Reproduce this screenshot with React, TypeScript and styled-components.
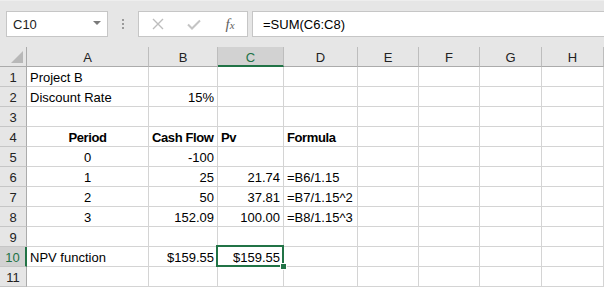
import styled, { createGlobalStyle } from "styled-components";

const GREEN = "#217346";
const GRID = "#d4d4d4";

const GlobalStyle = createGlobalStyle`
  html, body {
    margin: 0;
    padding: 0;
    background: #ffffff;
  }
  body {
    font-family: "Liberation Sans", Arial, sans-serif;
    font-size: 13px;
    color: #000;
    overflow: hidden;
  }
`;

type Align = "left" | "center" | "right";

const columns = ["A", "B", "C", "D", "E", "F", "G", "H"];

// one row = the 8 columns, values only
const rows: { text: string; align?: Align; bold?: boolean }[][] = [
  [{ text: "Project B" }],
  [{ text: "Discount Rate" }, { text: "15%", align: "right" }],
  [],
  [
    { text: "Period", align: "center", bold: true },
    { text: "Cash Flow", bold: true },
    { text: "Pv", bold: true },
    { text: "Formula", bold: true },
  ],
  [{ text: "0", align: "center" }, { text: "-100", align: "right" }],
  [
    { text: "1", align: "center" },
    { text: "25", align: "right" },
    { text: "21.74", align: "right" },
    { text: "=B6/1.15" },
  ],
  [
    { text: "2", align: "center" },
    { text: "50", align: "right" },
    { text: "37.81", align: "right" },
    { text: "=B7/1.15^2" },
  ],
  [
    { text: "3", align: "center" },
    { text: "152.09", align: "right" },
    { text: "100.00", align: "right" },
    { text: "=B8/1.15^3" },
  ],
  [],
  [
    { text: "NPV function" },
    { text: "$159.55", align: "right" },
    { text: "$159.55", align: "right" },
  ],
  [],
];

const activeRow = 10;
const activeCol = "C";

export default function App() {
  return (
    <Window>
      <GlobalStyle />
      <Toolbar>
        <NameBox>
          <span>C10</span>
          <DropArrow />
        </NameBox>
        <Grip>
          <i />
          <i />
          <i />
        </Grip>
        <FxButtons>
          <svg width="12" height="12" viewBox="0 0 12 12">
            <path d="M1 1 L11 11 M11 1 L1 11" stroke="#bdbdbd" strokeWidth="1.4" fill="none" />
          </svg>
          <svg width="14" height="11" viewBox="0 0 14 11">
            <path d="M1 5.5 L5 9.5 L13 1.5" stroke="#c4c4c4" strokeWidth="2" fill="none" />
          </svg>
          <FxLabel>
            f<sub>x</sub>
          </FxLabel>
        </FxButtons>
        <FormulaInput>=SUM(C6:C8)</FormulaInput>
      </Toolbar>

      <Sheet>
        <Corner />
        {columns.map((c) => (
          <ColHeader key={c} $active={c === activeCol}>
            {c}
          </ColHeader>
        ))}
        {rows.map((r, i) => {
          const n = i + 1;
          return [
            <RowHeader key={"h" + n} $active={n === activeRow}>
              {n}
            </RowHeader>,
            ...columns.map((c, j) => {
              const v = r[j];
              const selected = n === activeRow && c === activeCol;
              return (
                <Cell key={c + n} $align={v?.align ?? "left"} $bold={v?.bold}>
                  {v?.text}
                  {selected && (
                    <Selection>
                      <Handle />
                    </Selection>
                  )}
                </Cell>
              );
            }),
          ];
        })}
      </Sheet>
    </Window>
  );
}

const Window = styled.div`
  width: 604px;
  height: 287px;
  overflow: hidden;
  background: #fff;
`;

const Toolbar = styled.div`
  height: 47px;
  box-sizing: border-box;
  background: #e6e6e6;
  border-top: 1px solid #eeeeee;
  display: flex;
  align-items: flex-start;
  padding: 10px 0 0 6px;
`;

const NameBox = styled.div`
  width: 102px;
  height: 26px;
  box-sizing: border-box;
  background: #fff;
  border: 1px solid #c6c6c6;
  display: flex;
  align-items: center;
  justify-content: space-between;
  padding: 0 6px 0 6px;
  color: #222;
  font-size: 13px;
`;

const DropArrow = styled.span`
  width: 0;
  height: 0;
  border-left: 4px solid transparent;
  border-right: 4px solid transparent;
  border-top: 4px solid #7a7a7a;
  margin-top: -2px;
`;

const Grip = styled.div`
  width: 30px;
  height: 26px;
  display: flex;
  flex-direction: column;
  align-items: center;
  justify-content: center;
  gap: 2px;

  i {
    display: block;
    width: 2px;
    height: 2px;
    background: #9a9a9a;
  }
`;

const FxButtons = styled.div`
  width: 110px;
  height: 26px;
  box-sizing: border-box;
  background: #fff;
  border: 1px solid #c6c6c6;
  display: grid;
  grid-template-columns: 36px 36px 36px;
  align-items: center;
  justify-items: center;
  padding-left: 1px;
`;

const FxLabel = styled.span`
  font-family: "Liberation Serif", "Times New Roman", serif;
  font-style: italic;
  font-size: 15px;
  color: #5f5f5f;
  line-height: 1;

  sub {
    font-size: 11px;
    vertical-align: 0;
  }
`;

const FormulaInput = styled.div`
  flex: 1;
  height: 26px;
  box-sizing: border-box;
  margin-left: 4px;
  background: #fff;
  border: 1px solid #c6c6c6;
  border-right: none;
  display: flex;
  align-items: center;
  padding-left: 10px;
  font-size: 13px;
  color: #000;
`;

const Sheet = styled.div`
  display: grid;
  grid-template-columns: 27px 122px 69px 66px 74px 61px 61px 62px 62px;
  grid-auto-rows: 20px;
`;

const Corner = styled.div`
  position: relative;
  background: #e6e6e6;
  box-sizing: border-box;
  border-right: 1px solid #ababab;
  border-bottom: 1px solid #ababab;

  &::after {
    content: "";
    position: absolute;
    right: 3px;
    bottom: 3px;
    width: 0;
    height: 0;
    border-left: 12px solid transparent;
    border-bottom: 12px solid #b8b8b8;
  }
`;

const ColHeader = styled.div<{ $active?: boolean }>`
  box-sizing: border-box;
  background: ${(p) => (p.$active ? "#d2d2d2" : "#e6e6e6")};
  border-right: 1px solid #bdbdbd;
  border-bottom: ${(p) => (p.$active ? `2px solid ${GREEN}` : "1px solid #ababab")};
  color: ${(p) => (p.$active ? GREEN : "#222")};
  text-align: center;
  line-height: ${(p) => (p.$active ? "19px" : "20px")};
  padding-top: 1px;
  font-size: 13px;
`;

const RowHeader = styled.div<{ $active?: boolean }>`
  box-sizing: border-box;
  background: ${(p) => (p.$active ? "#d2d2d2" : "#e6e6e6")};
  border-right: ${(p) => (p.$active ? `2px solid ${GREEN}` : "1px solid #ababab")};
  border-bottom: 1px solid #c6c6c6;
  color: ${(p) => (p.$active ? GREEN : "#222")};
  text-align: center;
  line-height: 19px;
  padding-top: 1px;
  font-size: 13px;
`;

const Cell = styled.div<{ $align: Align; $bold?: boolean }>`
  position: relative;
  box-sizing: border-box;
  border-right: 1px solid ${GRID};
  border-bottom: 1px solid ${GRID};
  padding: 1px 3px 0 3px;
  line-height: 19px;
  text-align: ${(p) => p.$align};
  font-weight: ${(p) => (p.$bold ? 700 : 400)};
  letter-spacing: ${(p) => (p.$bold ? "-0.4px" : "0")};
  white-space: nowrap;
  color: #000;
`;

const Selection = styled.div`
  position: absolute;
  z-index: 2;
  top: -2px;
  left: -2px;
  right: -1px;
  bottom: -1px;
  border: 2px solid ${GREEN};
  pointer-events: none;
`;

const Handle = styled.div`
  position: absolute;
  right: -5px;
  bottom: -5px;
  width: 5px;
  height: 5px;
  background: ${GREEN};
  border: 1px solid #fff;
`;
